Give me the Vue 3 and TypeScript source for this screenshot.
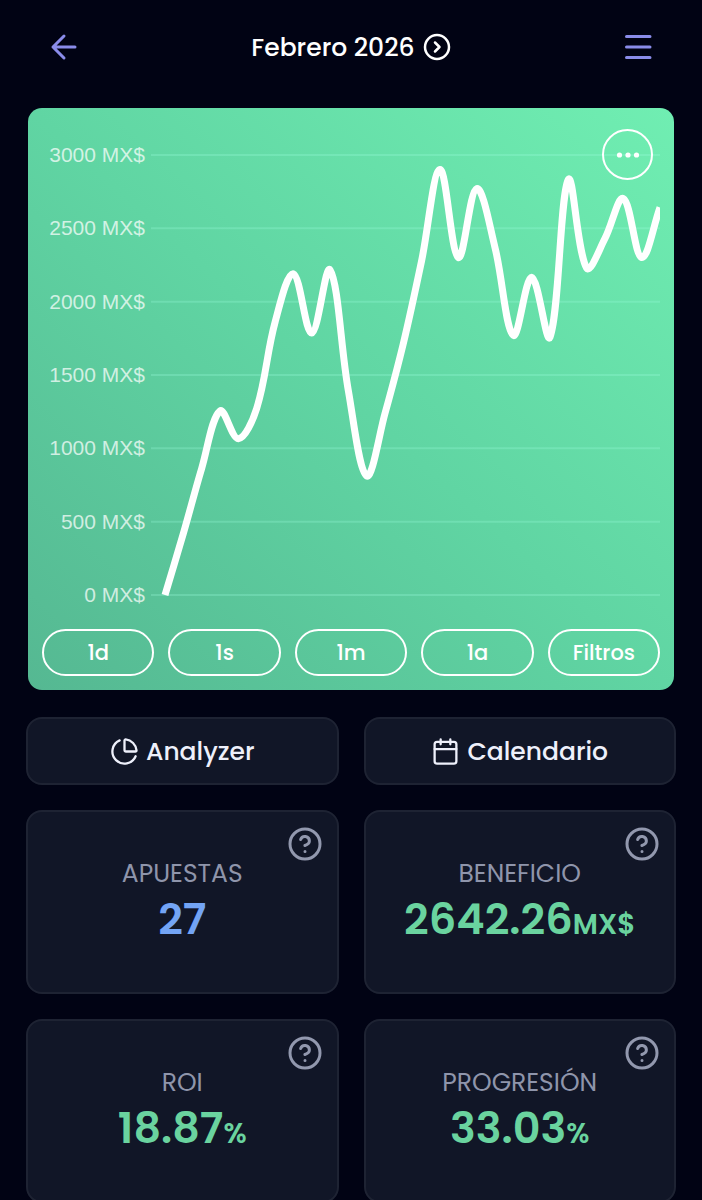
<script setup lang="ts">
import { computed } from 'vue'

interface Stat {
  label: string
  value: string
  unit: string
  tone: 'blue' | 'green'
}

const ticks: number[] = [3000, 2500, 2000, 1500, 1000, 500, 0]
const ranges: string[] = ['1d', '1s', '1m', '1a', 'Filtros']

const balance: number[] = [
  0, 419, 863, 1255, 1066, 1272, 1858, 2190, 1786, 2217, 1394, 812, 1238, 1715,
  2281, 2901, 2301, 2771, 2369, 1770, 2166, 1758, 2833, 2229, 2431, 2703, 2301, 2642.26,
]

const stats: Stat[] = [
  { label: 'APUESTAS', value: '27', unit: '', tone: 'blue' },
  { label: 'BENEFICIO', value: '2642.26', unit: 'MX$', tone: 'green' },
  { label: 'ROI', value: '18.87', unit: '%', tone: 'green' },
  { label: 'PROGRESIÓN', value: '33.03', unit: '%', tone: 'green' },
]

const plot = { width: 509, height: 440, left: 14, tension: 0.36 }

const linePath = computed<string>(() => {
  const step = (plot.width - plot.left) / (balance.length - 1)
  const pts = balance.map((v, i) => ({
    x: plot.left + i * step,
    y: plot.height - (v / 3000) * plot.height,
  }))
  const controls = pts.map((p, i) => {
    const prev = pts[i - 1] ?? p
    const next = pts[i + 1] ?? p
    const before = Math.hypot(p.x - prev.x, p.y - prev.y)
    const after = Math.hypot(next.x - p.x, next.y - p.y)
    const total = before + after
    const a = (plot.tension * before) / total
    const b = (plot.tension * after) / total
    return {
      inX: p.x - a * (next.x - prev.x),
      inY: p.y - a * (next.y - prev.y),
      outX: p.x + b * (next.x - prev.x),
      outY: p.y + b * (next.y - prev.y),
    }
  })
  let d = `M${pts[0].x} ${pts[0].y}`
  for (let i = 1; i < pts.length; i++) {
    const o = controls[i - 1]
    const c = controls[i]
    d += ` C${o.outX} ${o.outY} ${c.inX} ${c.inY} ${pts[i].x} ${pts[i].y}`
  }
  return d
})
</script>

<template>
  <div class="page">
    <header class="topbar">
      <button class="icon-btn" type="button" aria-label="Volver">
        <svg width="36" height="36" viewBox="0 0 36 36" class="stroke">
          <path d="M29 18H7M18 7L7 18l11 11" />
        </svg>
      </button>
      <button class="month" type="button">
        <span>Febrero 2026</span>
        <svg width="28" height="28" viewBox="0 0 28 28" class="stroke ring">
          <circle cx="14" cy="14" r="12" />
          <path d="M12 9.500l4.500 4.500-4.500 4.500" />
        </svg>
      </button>
      <button class="icon-btn" type="button" aria-label="Menú">
        <svg width="36" height="36" viewBox="0 0 36 36" class="stroke">
          <path d="M6.500 7.500h23.500M6.500 18h23.500M6.500 28.500h23.500" />
        </svg>
      </button>
    </header>

    <main>
      <section class="chart-card" aria-label="Evolución del beneficio">
        <button class="more" type="button" aria-label="Más opciones">
          <svg width="24" height="8" viewBox="0 0 24 8" fill="currentColor">
            <circle cx="3.500" cy="4" r="2.600" />
            <circle cx="12" cy="4" r="2.600" />
            <circle cx="20.500" cy="4" r="2.600" />
          </svg>
        </button>
        <div class="chart">
          <div class="axis">
            <span v-for="t in ticks" :key="t">{{ t }} MX$</span>
          </div>
          <svg
            class="plot"
            :viewBox="`0 -1 ${plot.width} ${plot.height + 2}`"
            preserveAspectRatio="none"
          >
            <line
              v-for="(t, i) in ticks"
              :key="t"
              class="grid-line"
              x1="0"
              :x2="plot.width"
              :y1="(i * plot.height) / 6"
              :y2="(i * plot.height) / 6"
            />
            <path class="series" :d="linePath" />
          </svg>
        </div>
        <div class="ranges">
          <button v-for="r in ranges" :key="r" type="button">{{ r }}</button>
        </div>
      </section>

      <div class="tiles">
        <button class="tile action" type="button">
          <svg width="29" height="29" viewBox="0 0 24 24" class="stroke thin">
            <path d="M21 12c.552 0 1.005-.449.950-.998a10 10 0 0 0-8.953-8.951c-.550-.055-.998.398-.998.950v8a1 1 0 0 0 1 1z" />
            <path d="M21.210 15.890A10 10 0 1 1 8 2.830" />
          </svg>
          <span>Analyzer</span>
        </button>
        <button class="tile action" type="button">
          <svg width="29" height="29" viewBox="0 0 24 24" class="stroke thin">
            <rect x="3" y="4" width="18" height="18" rx="2" />
            <path d="M8 2v4M16 2v4M3 10h18" />
          </svg>
          <span>Calendario</span>
        </button>

        <article v-for="s in stats" :key="s.label" class="tile stat">
          <button class="help" type="button" :aria-label="`Ayuda: ${s.label}`">
            <svg width="36" height="36" viewBox="0 0 24 24" class="stroke">
              <circle cx="12" cy="12" r="10" />
              <path d="M9.090 9a3 3 0 0 1 5.830 1c0 2-3 3-3 3M12 17h.01" />
            </svg>
          </button>
          <h2>{{ s.label }}</h2>
          <p :class="s.tone">{{ s.value }}<small v-if="s.unit">{{ s.unit }}</small></p>
        </article>
      </div>
    </main>
  </div>
</template>

<style>
body {
  background: #010314;
}
</style>

<style scoped>
.page {
  box-sizing: border-box;
  padding: 0 26px;
  height: 100vh;
  overflow: hidden;
  background: #010314;
  color: #fff;
  font-family: Poppins, Inter, 'Liberation Sans', sans-serif;
}
button {
  margin: 0;
  padding: 0;
  border: 0;
  background: none;
  color: inherit;
  font: inherit;
  cursor: pointer;
}
svg {
  display: block;
  flex: none;
}
.stroke {
  fill: none;
  stroke: currentColor;
  stroke-width: 3;
  stroke-linecap: round;
  stroke-linejoin: round;
}
.stroke.ring {
  stroke-width: 2.500;
}
.help .stroke {
  stroke-width: 2;
}
.stroke.thin {
  stroke-width: 1.900;
}
.topbar {
  display: flex;
  align-items: center;
  justify-content: space-between;
  padding: 24px 20px 38px;
  height: 46px;
}
.icon-btn {
  color: #8a8cea;
}
.month {
  display: flex;
  align-items: center;
  gap: 8px;
  font-size: 25px;
  font-weight: 500;
  line-height: 39px;
}
.chart-card {
  position: relative;
  margin: 0 2px;
  padding: 46px 14px 14px;
  border-radius: 14px;
  background: linear-gradient(to top right, #55b892 0%, #60d5a3 50%, #70eeb2 100%);
}
.more {
  position: absolute;
  top: 21px;
  right: 21px;
  display: flex;
  align-items: center;
  justify-content: center;
  width: 51px;
  height: 51px;
  border: 2px solid #fff;
  border-radius: 50%;
}
.chart {
  display: flex;
  gap: 6px;
  height: 442px;
}
.axis {
  display: flex;
  flex: none;
  flex-direction: column;
  justify-content: space-between;
  width: 103px;
  margin: -12px 0;
  color: rgba(255, 255, 255, 0.72);
  font-family: 'Liberation Sans', Arial, sans-serif;
  font-size: 21px;
  line-height: 26px;
  text-align: right;
  white-space: nowrap;
}
.plot {
  flex: 1;
  width: 0;
  height: 442px;
}
.grid-line {
  stroke: rgba(160, 255, 225, 0.26);
  stroke-width: 2;
  vector-effect: non-scaling-stroke;
}
.series {
  fill: none;
  stroke: #fff;
  stroke-width: 7;
  stroke-linejoin: round;
  vector-effect: non-scaling-stroke;
}
.ranges {
  display: flex;
  gap: 14px;
  margin-top: 33px;
}
.ranges button {
  flex: 1 1 0;
  height: 47px;
  border: 2px solid #fff;
  border-radius: 24px;
  font-size: 21px;
  font-weight: 500;
}
.tiles {
  display: grid;
  grid-template-columns: 1fr 1fr;
  gap: 25px;
  margin-top: 27px;
}
.tile {
  box-sizing: border-box;
  border: 2px solid #1e2333;
  border-radius: 16px;
  background: #111627;
}
.action {
  display: flex;
  align-items: center;
  justify-content: center;
  gap: 7px;
  height: 68px;
  color: #eef0fb;
  font-size: 25px;
  font-weight: 500;
  line-height: 39px;
}
.stat {
  position: relative;
  display: flex;
  flex-direction: column;
  align-items: center;
  justify-content: center;
  height: 184px;
}
.help {
  position: absolute;
  top: 14px;
  right: 14px;
  color: #9298ae;
}
h2 {
  margin: 0;
  color: #8f95ab;
  font-size: 25px;
  font-weight: 400;
  line-height: 34px;
}
p {
  margin: 0;
  font-size: 43px;
  font-weight: 600;
  line-height: 56px;
}
small {
  font-size: 28px;
  line-height: 28px;
}
.blue {
  color: #73a4f5;
}
.green {
  color: #6ad39f;
}
</style>
